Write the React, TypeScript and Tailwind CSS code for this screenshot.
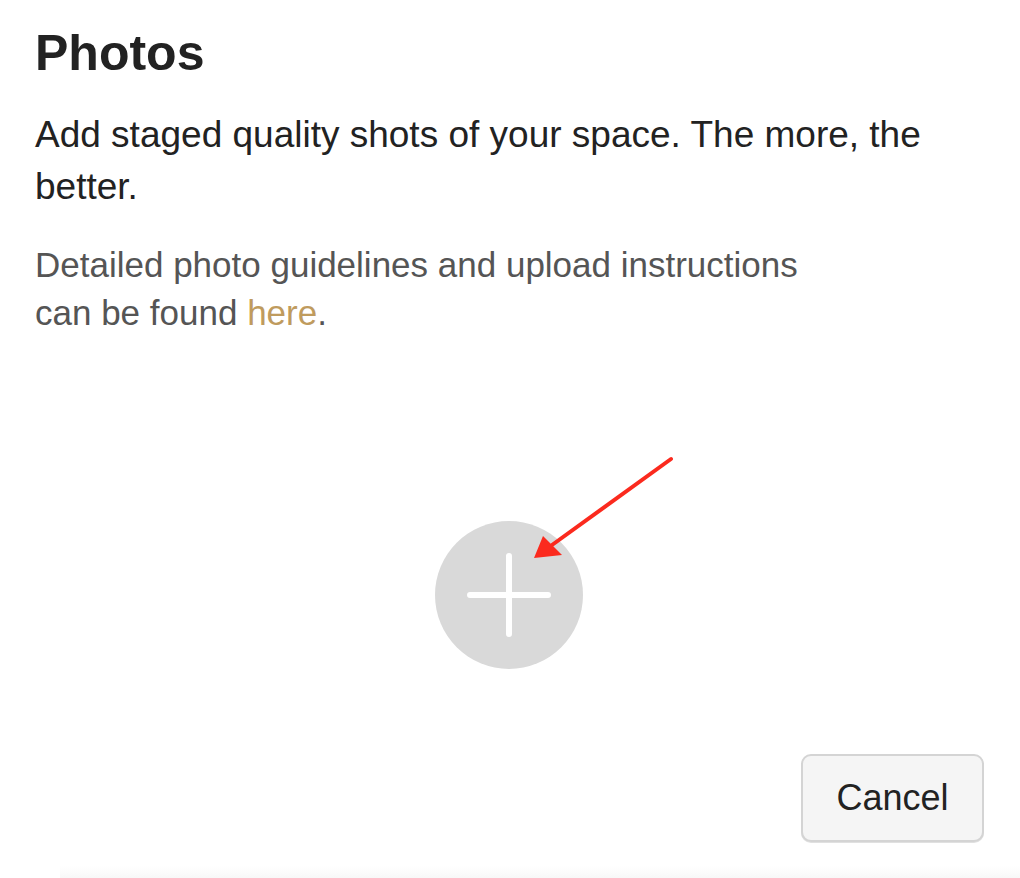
import React from 'react';

function PlusButton() {
  return (
    <button className="flex h-[148px] w-[148px] items-center justify-center rounded-full bg-[#d9d9d9]">
      <svg width="84" height="84" viewBox="0 0 84 84" fill="none">
        <path d="M42 3v78M3 42h78" stroke="#ffffff" strokeWidth="6" strokeLinecap="round" />
      </svg>
    </button>
  );
}

function Arrow() {
  return (
    <svg
      className="pointer-events-none absolute left-0 top-0"
      width="1020"
      height="878"
      viewBox="0 0 1020 878"
      fill="none"
    >
      <line x1="671" y1="459" x2="552" y2="545" stroke="#fb2a1e" strokeWidth="4" strokeLinecap="round" />
      <polygon points="534,558 543,536 562,555" fill="#fb2a1e" />
    </svg>
  );
}

export default function App() {
  return (
    <div
      className="relative flex h-[878px] w-[1020px] flex-col overflow-hidden bg-white pl-[35px] pr-[36px]"
      style={{ fontFamily: '"Liberation Sans", Arial, sans-serif' }}
    >
      <h1 className="mt-[28px] text-[50px] font-bold leading-none text-[#222222]">Photos</h1>

      <p className="mt-[31px] text-[37px] leading-[52px] text-[#222222]">
        Add staged quality shots of your space. The more, the better.
      </p>

      <p className="mt-[28px] text-[35px] leading-[48px] text-[#555555]">
        Detailed photo guidelines and upload instructions
        <br />
        can be found <a href="#" className="text-[#bf9b5e]">here</a>.
      </p>

      <div className="mt-[184px] flex justify-center pr-[1px]">
        <PlusButton />
      </div>

      <div className="mt-[85px] flex justify-end">
        <button className="h-[88px] w-[183px] rounded-[10px] border-2 border-[#d4d4d4] bg-[#f5f5f5] text-[36px] text-[#222222] shadow-[0_1px_0_#e0e0e0]">
          Cancel
        </button>
      </div>

      <div className="absolute bottom-0 left-[60px] right-0 h-[12px] bg-gradient-to-b from-white to-[#f8f8f8]" />

      <Arrow />
    </div>
  );
}
